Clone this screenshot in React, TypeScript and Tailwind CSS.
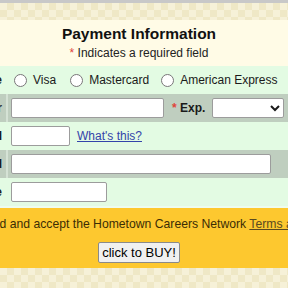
import React from 'react';

const checker = 'bg-[repeating-conic-gradient(#efe8c6_0_25%,#f6f1d8_0_50%)] bg-[length:14px_14px]';

interface RowProps {
	label: string;
	dark?: boolean;
	children: React.ReactNode;
};

const Row: React.FC<RowProps> = (props: RowProps) => {
	const { label, dark, children } = props;

	return (
		<div className={ `flex h-[28px] ${ dark ? 'bg-[#bfcebf]' : 'bg-[#e3fbe3]' }` }>
			<div className={ `flex w-[140px] shrink-0 items-center justify-end border-r-2 pr-[4px] font-bold ${ dark ? 'border-[#d5e2d5]' : 'border-[#e3fbe3]' }` }>
				{ label }
			</div>
			<div className="flex flex-1 items-center gap-[6px] pl-[3px]">
				{ children }
			</div>
		</div>
	);
};

const inputCls = 'h-[20px] rounded-[2px] border border-[#9c9c9c] bg-white';

const App: React.FC = () => {
	return (
		<div className="h-[288px] w-[288px] overflow-hidden bg-[#fffbe6] font-['Liberation_Sans',Arial,sans-serif] text-[12px] text-[#1a1a1a]">
			<div className="h-[3px] bg-[#c8c8c8]" />
			<div className={ `h-[17px] ${ checker }` } />
			<div className="ml-[-132px] w-[542px]">
				<div className="flex h-[46px] flex-col items-center pt-[4px]">
					<h1 className="text-[15.5px] leading-[20px] font-bold text-[#111]">Payment Information</h1>
					<p className="mt-[1px] leading-[16px] text-[#222]">
						<span className="text-[#e0453c]">*</span> Indicates a required field
					</p>
				</div>

				<Row label="Card Type">
					<label className="flex items-center gap-[6px]">
						<input type="radio" name="ct" className="m-0 ml-[3px] h-[13px] w-[13px]" />
						Visa
					</label>
					<label className="ml-[8px] flex items-center gap-[6px]">
						<input type="radio" name="ct" className="m-0 h-[13px] w-[13px]" />
						Mastercard
					</label>
					<label className="ml-[6px] flex items-center gap-[6px]">
						<input type="radio" name="ct" className="m-0 h-[13px] w-[13px]" />
						American Express
					</label>
				</Row>

				<Row label="Card Number" dark>
					<input type="text" className={ `${ inputCls } w-[153px]` } />
					<span className="ml-[2px] font-bold">
						<span className="text-[#e0453c]">*</span> Exp.
					</span>
					<select className="ml-[1px] h-[20px] w-[72px] rounded-[2px] border border-[#9c9c9c] bg-white" />
				</Row>

				<Row label="CVV2 Field">
					<input type="text" className={ `${ inputCls } w-[59px]` } />
					<a href="#" className="ml-[1px] text-[#3344aa] underline">What&apos;s this?</a>
				</Row>

				<Row label="Name on Card" dark>
					<input type="text" className={ `${ inputCls } w-[260px]` } />
				</Row>

				<Row label="Billing Zip Code">
					<input type="text" className={ `${ inputCls } w-[96px]` } />
				</Row>

				<div className="h-[2px] bg-[#eefcee]" />

				<div className="flex h-[60px] flex-col items-center bg-[#fdc82f] pt-[8px] text-[#3b2d05]">
					<p className="whitespace-nowrap pl-[38px] text-[12.2px] leading-[16px]">
						I have read and accept the Hometown Careers Network <a href="#" className="text-[#5a4a20] underline">Terms and Conditions</a>.
					</p>
					<button
						type="button"
						className="mt-[10px] h-[21px] rounded-[2px] border border-[#8a8a8a] bg-[#f0f0f0] px-[3px] text-[13px] text-black"
					>
						click to BUY!
					</button>
				</div>
			</div>
			<div className={ `h-[30px] ${ checker }` } />
		</div>
	);
};

export default App;
